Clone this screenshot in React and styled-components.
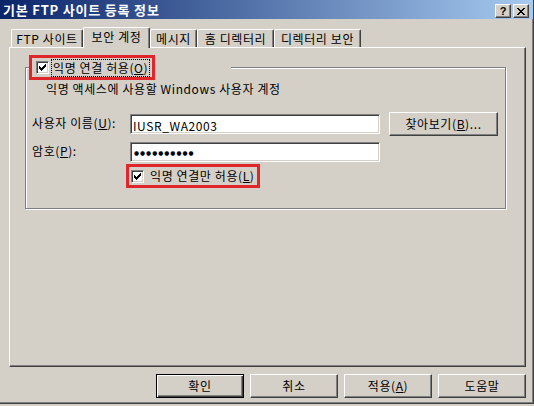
import styled, { createGlobalStyle } from 'styled-components';

// classic Windows 2000 palette
const face = '#d4d0c8';
const shadow = '#808080';
const darkShadow = '#404040';
const mark = '#e0262b';

const GlobalStyle = createGlobalStyle`
  html, body {
    margin: 0;
    padding: 0;
    background: ${face};
  }
  body {
    font-family: "Noto Sans CJK KR", "Liberation Sans", sans-serif;
    font-size: 12px;
    line-height: 14px;
    letter-spacing: 0.6px;
    color: #000;
  }
  u { text-underline-offset: 1px; }
`;

const Window = styled.div`
  width: 534px;
  height: 404px;
  box-sizing: border-box;
  background: ${face};
  border-right: 1px solid ${darkShadow};
  border-bottom: 1px solid ${darkShadow};
  box-shadow: inset -1px -1px 0 ${shadow};
  display: flex;
  flex-direction: column;
`;

const TitleBar = styled.div`
  height: 19px;
  flex-shrink: 0;
  display: flex;
  align-items: center;
  justify-content: space-between;
  background: linear-gradient(to right, #0a246a, #a6caf0);
  padding: 0 4px 0 3px;
`;

const Title = styled.span`
  color: #fff;
  font-weight: bold;
  font-size: 13px;
  letter-spacing: 0.8px;
  padding-top: 1px;
  white-space: nowrap;
`;

const CaptionButtons = styled.div`
  display: flex;
  gap: 2px;
  align-self: flex-start;
  margin-top: 4px;
`;

const CaptionButton = styled.div`
  width: 16px;
  height: 14px;
  box-sizing: border-box;
  background: ${face};
  border-top: 1px solid #fff;
  border-left: 1px solid #fff;
  border-right: 1px solid ${darkShadow};
  border-bottom: 1px solid ${darkShadow};
  box-shadow: inset -1px -1px 0 ${shadow};
  display: flex;
  align-items: center;
  justify-content: center;
  letter-spacing: 0;
  font: bold 11px/12px "Liberation Sans", sans-serif;
`;

const Body = styled.div`
  flex: 1;
  display: flex;
  flex-direction: column;
  padding: 8px 7px 0 9px;
`;

const TabStrip = styled.div`
  display: flex;
  align-items: flex-end;
  height: 20px;
  padding-left: 2px;
`;

const Tab = styled.div`
  width: ${p => p.$width}px;
  height: ${p => (p.$active ? 21 : 18)}px;
  margin-bottom: ${p => (p.$active ? -1 : 0)}px;
  box-sizing: border-box;
  position: relative;
  z-index: ${p => (p.$active ? 1 : 0)};
  background: ${face};
  border-top: 1px solid #fff;
  border-left: 1px solid #fff;
  border-right: 1px solid ${darkShadow};
  border-radius: 2px 2px 0 0;
  box-shadow: inset -1px 0 0 ${shadow};
  display: flex;
  align-items: center;
  justify-content: center;
  padding-bottom: ${p => (p.$active ? 3 : 0)}px;
  white-space: nowrap;
`;

const TabPanel = styled.div`
  height: 320px;
  box-sizing: border-box;
  border-top: 1px solid #fff;
  border-left: 1px solid #fff;
  border-right: 1px solid ${darkShadow};
  border-bottom: 1px solid ${darkShadow};
  box-shadow: inset -1px -1px 0 ${shadow};
  padding: 19px 0 0 15px;
`;

const GroupBox = styled.div`
  width: 481px;
  height: 142px;
  box-sizing: border-box;
  border: 1px solid ${shadow};
  box-shadow: 1px 1px 0 #fff, inset 1px 1px 0 #fff;
  padding-left: 3px;
  display: flex;
  flex-direction: column;
  align-items: flex-start;
`;

const GroupHeader = styled.div`
  width: 202px;
  height: 25px;
  margin-top: -13px;
  background: ${face};
`;

const Highlight = styled.div`
  width: ${p => p.$width}px;
  height: ${p => p.$height}px;
  box-sizing: border-box;
  border: 3px solid ${mark};
  display: flex;
  align-items: center;
  padding-left: ${p => p.$pad}px;
  margin-left: ${p => p.$indent || 0}px;
  margin-top: ${p => p.$top || 0}px;
  white-space: nowrap;
`;

const CheckLabel = styled.span`
  margin-left: ${p => (p.$focus ? 2 : 4)}px;
  padding: 1px 1px;
  border: 1px ${p => (p.$focus ? 'dotted #000' : 'solid transparent')};
`;

const Box = styled.span`
  width: 13px;
  height: 13px;
  flex-shrink: 0;
  box-sizing: border-box;
  background: #fff;
  border-top: 1px solid ${shadow};
  border-left: 1px solid ${shadow};
  border-right: 1px solid #fff;
  border-bottom: 1px solid #fff;
  box-shadow: inset 1px 1px 0 ${darkShadow}, inset -1px -1px 0 ${face};
  display: block;
  svg { display: block; }
`;

const Caption = styled.div`
  margin: 2px 0 0 17px;
  white-space: nowrap;
`;

const FormRow = styled.div`
  display: grid;
  grid-template-columns: 89px 250px 109px;
  column-gap: 9px;
  align-items: center;
  height: ${p => p.$height}px;
  margin-top: ${p => p.$top}px;
  padding-left: 3px;
`;

const Label = styled.span`
  white-space: nowrap;
  margin-bottom: 2px;
`;

const TextBox = styled.div`
  height: 20px;
  box-sizing: border-box;
  background: #fff;
  border-top: 1px solid ${shadow};
  border-left: 1px solid ${shadow};
  border-right: 1px solid #fff;
  border-bottom: 1px solid #fff;
  box-shadow: inset 1px 1px 0 ${darkShadow}, inset -1px -1px 0 ${face};
  padding: 2px 0 0 2px;
  line-height: 15px;
  white-space: nowrap;
  display: flex;
  align-items: center;
`;

const Dots = styled.span`
  font-family: "DejaVu Sans", sans-serif;
  font-size: 5.8px;
  line-height: 6px;
  letter-spacing: 1px;
  margin: 0 0 1px 1px;
`;

const PushButton = styled.div`
  width: ${p => p.$width}px;
  height: 24px;
  box-sizing: border-box;
  background: ${face};
  display: flex;
  align-items: center;
  justify-content: center;
  white-space: nowrap;
  ${p =>
    p.$default
      ? `border: 1px solid #000;
         box-shadow: inset 1px 1px 0 #fff, inset -1px -1px 0 ${darkShadow}, inset -2px -2px 0 ${shadow};`
      : `border-top: 1px solid #fff;
         border-left: 1px solid #fff;
         border-right: 1px solid ${darkShadow};
         border-bottom: 1px solid ${darkShadow};
         box-shadow: inset -1px -1px 0 ${shadow};`}
`;

const ButtonBar = styled.div`
  display: flex;
  justify-content: flex-end;
  gap: 6px;
  margin-top: 7px;
`;

const CHECK = [
  '......X',
  '.....XX',
  'X...XXX',
  'XX.XXX.',
  'XXXXX..',
  '.XXX...',
  '..X....',
];

const CLOSE = [
  'XX....XX',
  '.XX..XX.',
  '..XXXX..',
  '...XX...',
  '..XXXX..',
  '.XX..XX.',
  'XX....XX',
];

function Pixels({ rows, w, h, dx = 0, dy = 0 }) {
  return (
    <svg width={w} height={h} shapeRendering="crispEdges">
      {rows.flatMap((row, y) =>
        [...row].map((c, x) =>
          c === 'X' ? <rect key={`${x}-${y}`} x={x + dx} y={y + dy} width="1" height="1" fill="#000" /> : null
        )
      )}
    </svg>
  );
}

function CheckBox() {
  return (
    <Box>
      <Pixels rows={CHECK} w={11} h={11} dx={2} dy={2} />
    </Box>
  );
}

const tabs = [
  { label: 'FTP 사이트', width: 72 },
  { label: '보안 계정', width: 67, active: true },
  { label: '메시지', width: 47 },
  { label: '홈 디렉터리', width: 77 },
  { label: '디렉터리 보안', width: 87 },
];

export default function App() {
  return (
    <>
      <GlobalStyle />
      <Window>
        <TitleBar>
          <Title>기본 FTP 사이트 등록 정보</Title>
          <CaptionButtons>
            <CaptionButton>?</CaptionButton>
            <CaptionButton>
              <Pixels rows={CLOSE} w={8} h={7} />
            </CaptionButton>
          </CaptionButtons>
        </TitleBar>
        <Body>
          <TabStrip>
            {tabs.map(t => (
              <Tab key={t.label} $width={t.width} $active={t.active}>
                {t.label}
              </Tab>
            ))}
          </TabStrip>
          <TabPanel>
            <GroupBox>
              <GroupHeader>
                <Highlight $width={126} $height={25} $pad={4}>
                  <CheckBox />
                  <CheckLabel $focus>
                    익명 연결 허용(<u>O</u>)
                  </CheckLabel>
                </Highlight>
              </GroupHeader>
              <Caption>익명 액세스에 사용할 Windows 사용자 계정</Caption>
              <FormRow $height={24} $top={16}>
                <Label>
                  사용자 이름(<u>U</u>):
                </Label>
                <TextBox>IUSR_WA2003</TextBox>
                <PushButton $width={109}>
                  찾아보기(<u>B</u>)...
                </PushButton>
              </FormRow>
              <FormRow $height={20} $top={6}>
                <Label>
                  암호(<u>P</u>):
                </Label>
                <TextBox>
                  <Dots>●●●●●●●●●●</Dots>
                </TextBox>
              </FormRow>
              <Highlight $width={134} $height={24} $pad={2} $indent={97} $top={2}>
                <CheckBox />
                <CheckLabel>
                  익명 연결만 허용(<u>L</u>)
                </CheckLabel>
              </Highlight>
            </GroupBox>
          </TabPanel>
          <ButtonBar>
            <PushButton $width={88} $default>확인</PushButton>
            <PushButton $width={88}>취소</PushButton>
            <PushButton $width={88}>
              적용(<u>A</u>)
            </PushButton>
            <PushButton $width={88}>도움말</PushButton>
          </ButtonBar>
        </Body>
      </Window>
    </>
  );
}
